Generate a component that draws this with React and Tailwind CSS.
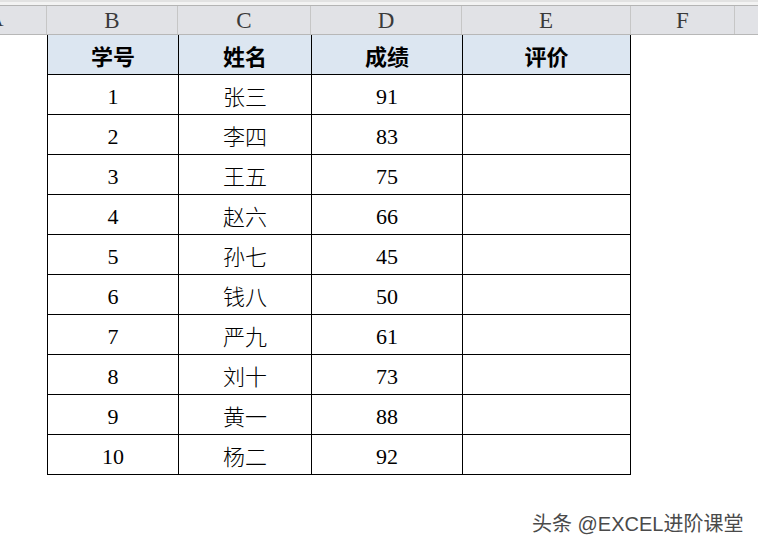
import React from "react";

const rows = [
  ["1", "张三", "91"],
  ["2", "李四", "83"],
  ["3", "王五", "75"],
  ["4", "赵六", "66"],
  ["5", "孙七", "45"],
  ["6", "钱八", "50"],
  ["7", "严九", "61"],
  ["8", "刘十", "73"],
  ["9", "黄一", "88"],
  ["10", "杨二", "92"],
];

const serif = { fontFamily: '"Liberation Serif", "Noto Sans CJK SC", serif' };
const cjk = { fontFamily: '"Noto Sans CJK SC", sans-serif' };

export default function App() {
  return (
    <div className="relative w-[758px] h-[550px] overflow-hidden bg-white" style={serif}>
      {/* top strip */}
      <div className="h-[6px] bg-[#f3f3f3] border-b border-[#b4b4b4] border-t-2 border-t-[#e2e2e2]" />
      {/* column headers */}
      <div className="flex h-[29px] bg-[#e1e2e6] border-b border-[#b7b7b7] text-[23px] leading-[30px] text-[#3a3a3a]">
        <div className="w-[47px] shrink-0 border-r border-[#c6c6c6] relative overflow-hidden">
          <span className="absolute left-[-13px] top-[-2px]">A</span>
        </div>
        <div className="w-[131px] shrink-0 border-r border-[#c6c6c6] text-center">B</div>
        <div className="w-[133px] shrink-0 border-r border-[#c6c6c6] text-center">C</div>
        <div className="w-[151px] shrink-0 border-r border-[#c6c6c6] text-center">D</div>
        <div className="w-[169px] shrink-0 border-r border-[#c6c6c6] text-center">E</div>
        <div className="w-[104px] shrink-0 border-r border-[#c6c6c6] text-center">F</div>
        <div className="flex-1" />
      </div>
      {/* table */}
      <div className="ml-[47px] w-[584px] border-l border-black">
        <div className="flex h-[40px] bg-[#dce6f1] border-b border-black text-[22px] font-semibold text-black" style={cjk}>
          <div className="w-[131px] border-r border-black flex items-center justify-center pt-[2px]">学号</div>
          <div className="w-[133px] border-r border-black flex items-center justify-center pt-[2px]">姓名</div>
          <div className="w-[151px] border-r border-black flex items-center justify-center pt-[2px]">成绩</div>
          <div className="w-[168px] border-r border-black flex items-center justify-center pt-[2px]">评价</div>
        </div>
        {rows.map((r) => (
          <div key={r[0]} className="flex h-[40px] border-b border-black text-[22px] text-black">
            <div className="w-[131px] border-r border-black flex items-center justify-center pt-[3px]">{r[0]}</div>
            <div className="w-[133px] border-r border-black flex items-center justify-center pt-[2px]" style={{ ...cjk, fontWeight: 300 }}>{r[1]}</div>
            <div className="w-[151px] border-r border-black flex items-center justify-center pt-[3px]">{r[2]}</div>
            <div className="w-[168px] border-r border-black" />
          </div>
        ))}
      </div>
      {/* watermark */}
      <div
        className="absolute left-[532px] top-[510px] text-[20px] leading-[28px] text-[#4a4a4a] whitespace-nowrap"
        style={{ fontFamily: '"Liberation Sans", "Noto Sans CJK SC", sans-serif', textShadow: "1px 1px 0 #fff, -1px -1px 0 #fff, 1px -1px 0 #fff, -1px 1px 0 #fff" }}
      >
        头条 @EXCEL进阶课堂
      </div>
    </div>
  );
}
